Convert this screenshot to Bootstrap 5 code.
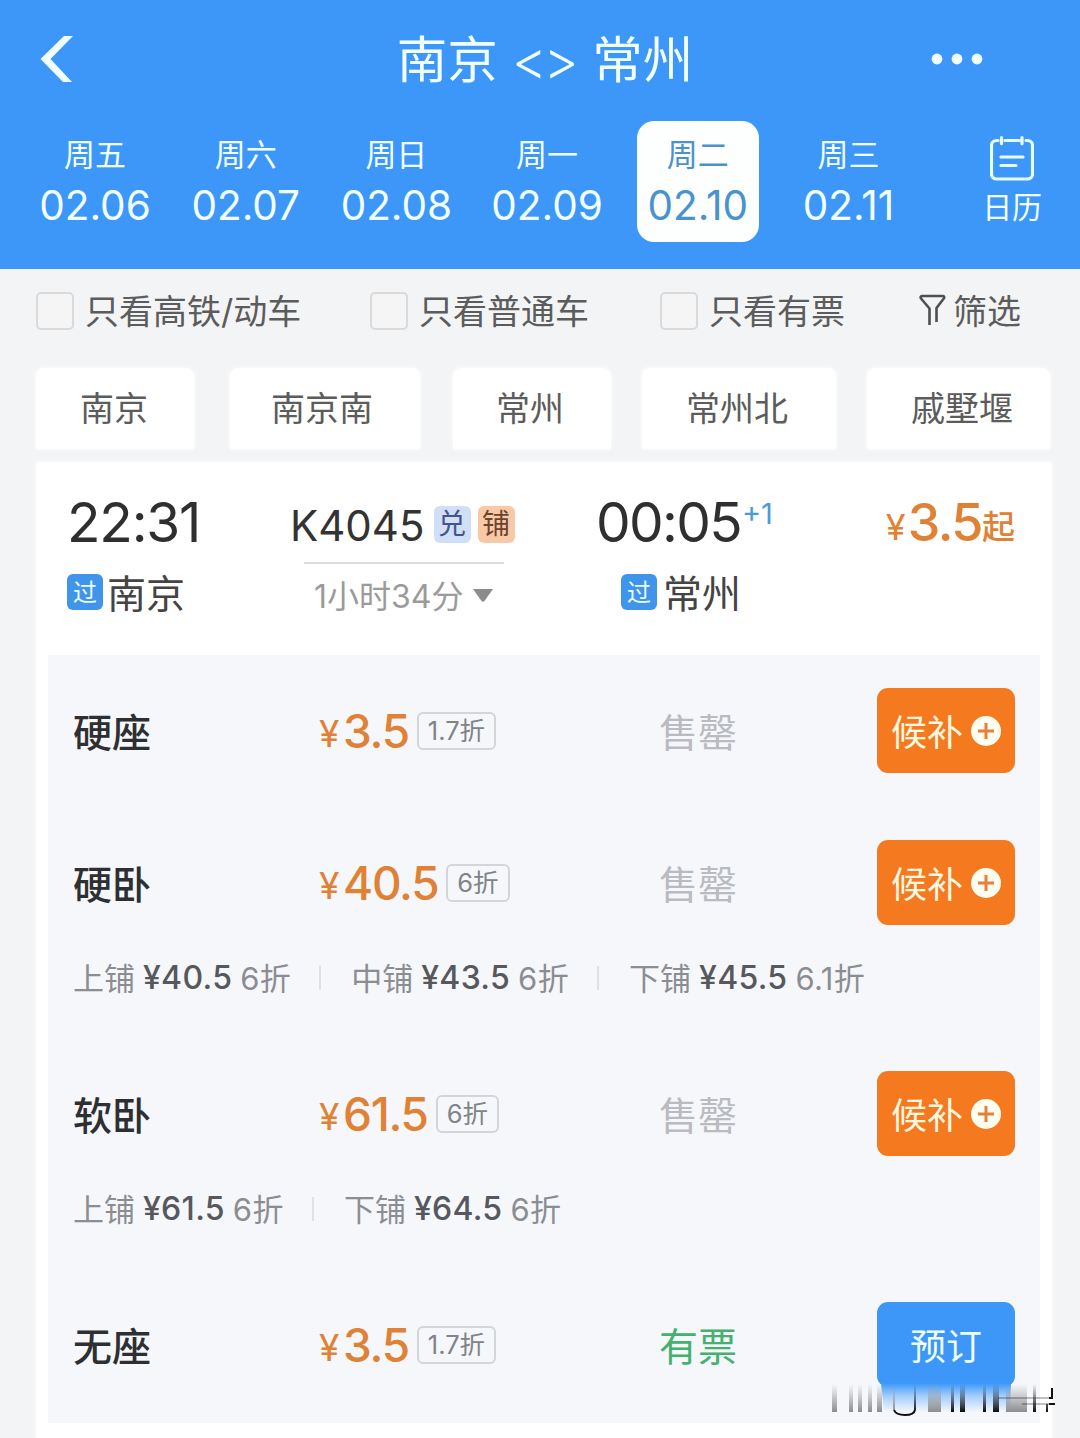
<!DOCTYPE html>
<html lang="zh-CN">
<head>
<meta charset="utf-8">
<meta name="viewport" content="width=device-width, initial-scale=1">
<title>南京 - 常州</title>
<link href="https://cdn.jsdelivr.net/npm/bootstrap@5.3.0/dist/css/bootstrap.min.css" rel="stylesheet">
<style>
  body { font-family: Inter, "Noto Sans CJK SC", sans-serif; background: #f3f4f5; color: #333; width: 1080px; height: 1438px; overflow: hidden; line-height: 1; white-space: nowrap; }
  svg { display: block; flex: none; }
  .topbar { height: 269px; background: #3c97f9; color: #f2ffff; }
  .titlebar { height: 119px; padding: 0 97px 0 40px; }
  .title { font-size: 50.500px; padding: 2px 0 0 85px; }
  .title .arrows { font-size: 54px; font-weight: 300; letter-spacing: -3.500px; margin: 0 17px 0 14px; }
  .days { padding: 2px 0 0 34px; gap: 28.7px; }
  .day { width: 122px; height: 121px; border-radius: 17px; padding-top: 13px; }
  .day .wk { font-size: 31px; line-height: 42px; }
  .day .dt { font-size: 40.500px; line-height: 60px; }
  .day.on { background: #fdffff; color: #4a92cd; }
  .cal { width: 60px; margin-left: 44px; padding-top: 15px; font-size: 30px; }
  .cal span { line-height: 52px; }
  .filters { height: 99px; padding: 0 0 15px 36px; font-size: 34px; color: #5c5c5c; }
  .filters .txt { padding-top: 2px; }
  .box { width: 38px; height: 38px; border: 2px solid #dadada; border-radius: 5px; background: #f6f5f5; margin-right: 11px; flex: none; }
  .stations { padding-left: 36px; height: 94px; font-size: 34px; color: #5c5c5c; }
  .station { height: 81px; padding: 1px 2px 0 0; background: #fff; border-radius: 8px 8px 2px 2px; box-shadow: 0 0 5px #fff; }
  .train { margin-left: 36px; width: 1016px; height: 976px; background: #fff; box-shadow: 0 0 4px #fff; }
  .summary { height: 192px; padding: 31px 37px 0 31px; }
  .line1 { height: 60px; }
  .line2 { height: 40px; margin-top: 19px; }
  .clock { font-size: 55px; color: #2f2f2f; letter-spacing: -1.2px; padding-bottom: 1px; }
  .city { font-size: 39px; color: #444; }
  .city .nm { padding-top: 3px; }
  .via { width: 36px; height: 36px; border-radius: 6px; background: #4094ea; color: #e8fcff; font-size: 24px; margin-right: 4px; padding-top: 2px; }
  .flag { width: 37px; height: 37px; border-radius: 6px; font-size: 28px; }
  .orange { color: #e08235; font-weight: 500; }
  .seats { margin: 1px 12px 0; height: 768px; background: #f5f7fb; padding: 33px 25px 0; }
  .seat { height: 85px; }
  .seat .kind { width: 246px; font-size: 39px; font-weight: 500; color: #2e2f33; padding-top: 3px; }
  .fare { width: 340px; }
  .fare .yen { font-size: 37px; width: 24px; margin-top: 5px; font-weight: 400; }
  .fare .num { font-size: 46px; letter-spacing: -1.3px; padding-top: 1px; }
  .off { border: 2px solid #d3d5d9; border-radius: 6px; height: 38px; padding: 0 9px; font-size: 25.500px; color: #808389; margin-left: 8px; }
  .state { width: 218px; font-size: 39px; color: #b9bbc0; padding-top: 3px; }
  .act { width: 138px; height: 85px; border: 0; border-radius: 11px; background: #f5791f; color: #fff8e0; font-size: 36px; --bs-btn-padding-x: 0; --bs-btn-padding-y: 0; }
  .act .txt { padding-top: 4px; }
  .act.book { background: #3c97f9; color: #effeff; }
  .berths { height: 40px; margin-top: 33px; font-size: 31px; color: #8b8d92; }
  .berths b { color: #56585d; font-weight: 500; font-size: 32px; letter-spacing: .3px; margin: 0 8px 0 8px; }
  .berths em { font-style: normal; letter-spacing: .4px; }
  .berths i { width: 2px; height: 24px; background: #dfe1e6; margin: 0 30px 0 28px; }
  .smear { position: absolute; left: 828px; top: 1380px; }
</style>
</head>
<body class="position-relative">
<header class="topbar">
  <div class="titlebar d-flex align-items-center justify-content-between">
    <svg width="34" height="48" viewBox="0 0 34 48" fill="#f2ffff"><path d="M24 0h9L10.500 23 32 46h-9L.5 23z"/></svg>
    <div class="title d-flex align-items-center"><span>南京</span><span class="arrows">&lt;&gt;</span><span>常州</span></div>
    <svg width="52" height="14" viewBox="0 0 52 14" fill="#f2ffff"><circle cx="6" cy="6" r="5.400"/><circle cx="26" cy="6" r="5.400"/><circle cx="46" cy="6" r="5.400"/></svg>
  </div>
  <nav class="days d-flex">
    <div class="day text-center"><div class="wk">周五</div><div class="dt">02.06</div></div>
    <div class="day text-center"><div class="wk">周六</div><div class="dt">02.07</div></div>
    <div class="day text-center"><div class="wk">周日</div><div class="dt">02.08</div></div>
    <div class="day text-center"><div class="wk">周一</div><div class="dt">02.09</div></div>
    <div class="day on text-center"><div class="wk">周二</div><div class="dt">02.10</div></div>
    <div class="day text-center"><div class="wk">周三</div><div class="dt">02.11</div></div>
    <div class="cal d-flex flex-column align-items-center">
      <svg width="44" height="45" viewBox="0 0 44 45" fill="none" stroke="#e6fdff" stroke-width="3.200" stroke-linecap="round"><path d="M8 4.500H6.500a5 5 0 0 0-5 5V38a5 5 0 0 0 5 5h31a5 5 0 0 0 5-5V9.500a5 5 0 0 0-5-5H36M15 4.500h14M11.500 1.700v6M32 1.700v6M11 21h22M11 29.500h15"/></svg>
      <span>日历</span>
    </div>
  </nav>
</header>

<section class="filters d-flex align-items-center">
  <label class="d-flex align-items-center" style="width:334px"><span class="box"></span><span class="txt">只看高铁/动车</span></label>
  <label class="d-flex align-items-center" style="width:290px"><span class="box"></span><span class="txt">只看普通车</span></label>
  <label class="d-flex align-items-center" style="width:259px"><span class="box"></span><span class="txt">只看有票</span></label>
  <svg width="27" height="34" viewBox="0 0 27 34" fill="none" stroke="#4f4f4f" stroke-width="2.600" stroke-linejoin="round"><path d="M10.500 31V14.500L2 4.500Q.8 2 3.500 2h20Q26 2 24.800 4.500L17.500 14V28"/></svg>
  <span class="txt" style="padding-left:7px">筛选</span>
</section>

<section class="stations d-flex">
  <div class="station d-flex align-items-center justify-content-center" style="width:158px;margin-right:36px">南京</div>
  <div class="station d-flex align-items-center justify-content-center" style="width:190px;margin-right:33px;padding-right:6px">南京南</div>
  <div class="station d-flex align-items-center justify-content-center" style="width:158px;margin-right:31px;padding-right:4px">常州</div>
  <div class="station d-flex align-items-center justify-content-center" style="width:194px;margin-right:31px;padding-right:4px">常州北</div>
  <div class="station d-flex align-items-center justify-content-center" style="width:183px;padding-left:9px">戚墅堰</div>
</section>

<main class="train">
  <div class="summary d-flex">
    <div style="width:223px">
      <div class="line1 d-flex align-items-center clock">22:31</div>
      <div class="line2 d-flex align-items-center city"><span class="via d-flex align-items-center justify-content-center">过</span><span class="nm">南京</span></div>
    </div>
    <div style="width:306px">
      <div class="line1 d-flex align-items-center" style="font-size:42px;padding-top:2px;color:#333"><span class="pt-1">K4045</span>
        <span class="flag d-flex align-items-center justify-content-center" style="background:#cfdff8;color:#44548a;margin-left:9px">兑</span>
        <span class="flag d-flex align-items-center justify-content-center" style="background:#f8c9a6;color:#6b4430;margin-left:7px">铺</span>
      </div>
      <div style="width:200px;height:2px;background:#dcdcdc;margin:9px 0 0 14px"></div>
      <div class="d-flex align-items-center" style="height:40px;margin-top:13px;padding-left:24px;font-size:32px;color:#9b9b9b">1小时34分<svg style="margin:-4px 0 0 9px" width="22" height="15" viewBox="0 0 22 15" fill="#8c8c8c"><path d="M1 1h20L12.500 13q-1.500 1.500-3 0z"/></svg></div>
    </div>
    <div class="flex-grow-1">
      <div class="line1 d-flex align-items-center clock" style="letter-spacing:-1.700px">00:05<span style="font-size:29px;letter-spacing:0;color:#4b9ad8;height:47px;margin-left:1px">+1</span></div>
      <div class="line2 d-flex align-items-center city" style="padding-left:25px"><span class="via d-flex align-items-center justify-content-center" style="margin-right:6px">过</span><span class="nm">常州</span></div>
    </div>
    <div class="line1 d-flex align-items-center orange"><span style="font-size:36px;padding-top:7px;width:22px;font-weight:400">¥</span><span style="font-size:52px;letter-spacing:-1.500px;padding-bottom:1px">3.5</span><span style="font-size:33px;padding-top:9px">起</span></div>
  </div>

  <div class="seats">
    <div class="seat d-flex align-items-center">
      <div class="kind">硬座</div>
      <div class="fare d-flex align-items-center orange"><span class="yen">¥</span><span class="num">3.5</span><span class="off d-flex align-items-center fw-normal">1.7折</span></div>
      <div class="state">售罄</div>
      <button class="btn act d-flex align-items-center justify-content-center"><span class="txt">候补</span><svg class="ms-2" width="30" height="30" viewBox="0 0 30 30"><circle cx="15" cy="15" r="15" fill="#fffdf0"/><path d="M7 15h16M15 7v16" stroke="#e5803c" stroke-width="3"/></svg></button>
    </div>
    <div class="seat d-flex align-items-center" style="margin-top:67px">
      <div class="kind">硬卧</div>
      <div class="fare d-flex align-items-center orange"><span class="yen">¥</span><span class="num">40.5</span><span class="off d-flex align-items-center fw-normal">6折</span></div>
      <div class="state">售罄</div>
      <button class="btn act d-flex align-items-center justify-content-center"><span class="txt">候补</span><svg class="ms-2" width="30" height="30" viewBox="0 0 30 30"><circle cx="15" cy="15" r="15" fill="#fffdf0"/><path d="M7 15h16M15 7v16" stroke="#e5803c" stroke-width="3"/></svg></button>
    </div>
    <div class="berths d-flex align-items-center">上铺<b>¥40.5</b><em>6折</em><i></i>中铺<b>¥43.5</b><em>6折</em><i></i>下铺<b>¥45.5</b><em>6.1折</em></div>
    <div class="seat d-flex align-items-center" style="margin-top:73px">
      <div class="kind">软卧</div>
      <div class="fare d-flex align-items-center orange"><span class="yen">¥</span><span class="num">61.5</span><span class="off d-flex align-items-center fw-normal">6折</span></div>
      <div class="state">售罄</div>
      <button class="btn act d-flex align-items-center justify-content-center"><span class="txt">候补</span><svg class="ms-2" width="30" height="30" viewBox="0 0 30 30"><circle cx="15" cy="15" r="15" fill="#fffdf0"/><path d="M7 15h16M15 7v16" stroke="#e5803c" stroke-width="3"/></svg></button>
    </div>
    <div class="berths d-flex align-items-center">上铺<b>¥61.5</b><em>6折</em><i></i>下铺<b>¥64.5</b><em>6折</em></div>
    <div class="seat d-flex align-items-center" style="margin-top:73px">
      <div class="kind">无座</div>
      <div class="fare d-flex align-items-center orange"><span class="yen">¥</span><span class="num">3.5</span><span class="off d-flex align-items-center fw-normal">1.7折</span></div>
      <div class="state" style="color:#45b070">有票</div>
      <button class="btn act book d-flex align-items-center justify-content-center"><span class="txt">预订</span></button>
    </div>
  </div>
</main>

<!-- fading strip over the lower edge of the last button -->
<svg class="smear" width="232" height="40" viewBox="828 1380 232 40">
  <defs>
    <linearGradient id="blue" x1="0" y1="0" x2="0" y2="1"><stop offset="0" stop-color="#3c97f9"/><stop offset=".45" stop-color="#a3cdfb"/><stop offset="1" stop-color="#f5f7fb"/></linearGradient>
    <linearGradient id="grey" x1="0" y1="0" x2="0" y2="1"><stop offset="0" stop-color="#999" stop-opacity="0"/><stop offset="1" stop-color="#8c8c8c"/></linearGradient>
    <linearGradient id="dark" x1="0" y1="0" x2="0" y2="1"><stop offset="0" stop-color="#123" stop-opacity="0"/><stop offset="1" stop-color="#0a0a0a"/></linearGradient>
  </defs>
  <path fill="#f5f7fb" d="M876 1384h140v29H876z"/>
  <path fill="url(#blue)" d="M881 1383h130l-1 29H884z"/>
  <path fill="url(#grey)" d="M832 1384h5v28h-5zM849 1384h4v28h-4zM858 1384h4v28h-4zM868 1384h4v28h-4zM877 1384h5v28h-5zM893 1384h2v26h-2zM928 1384h13v28h-13zM1006 1384h21v28h-21z"/>
  <path fill="url(#dark)" d="M914 1384h2v26h-2zM951 1384h3v28h-3zM960 1384h5v28h-5zM983 1384h3v28h-3zM993 1384h6v28h-6zM1033 1384h3v28h-3zM1046 1404h2v8h-2z"/>
  <path fill="none" stroke="#111" stroke-width="2" d="M894 1410q2 5 11 5t10-5M1052 1388v11M1049 1398h4M1049 1404h6"/>
  <path fill="none" stroke="#111" stroke-opacity=".35" stroke-width="1.500" d="M998 1398h51M1022 1404h27"/>
</svg>
<script src="https://cdn.jsdelivr.net/npm/bootstrap@5.3.0/dist/js/bootstrap.bundle.min.js"></script>
</body>
</html>
